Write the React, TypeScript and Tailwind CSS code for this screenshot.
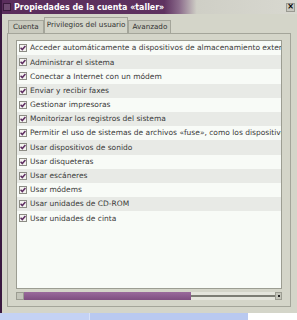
const privileges = [
  'Acceder automáticamente a dispositivos de almacenamiento externo',
  'Administrar el sistema',
  'Conectar a Internet con un módem',
  'Enviar y recibir faxes',
  'Gestionar impresoras',
  'Monitorizar los registros del sistema',
  'Permitir el uso de sistemas de archivos «fuse», como los dispositivos LTSP',
  'Usar dispositivos de sonido',
  'Usar disqueteras',
  'Usar escáneres',
  'Usar módems',
  'Usar unidades de CD-ROM',
  'Usar unidades de cinta',
];

function CheckBox() {
  return (
    <span className="flex h-[8px] w-[8px] shrink-0 items-center justify-center border border-[#8c8c84] bg-[#f4f4f0]">
      <svg width="6" height="6" viewBox="0 0 6 6">
        <path d="M0.6 2.8 L2.3 4.6 L5.4 0.9" fill="none" stroke="#5e2e62" strokeWidth="1.5" />
      </svg>
    </span>
  );
}

export default function App() {
  return (
    <div className="relative h-[320px] w-[297px] overflow-hidden bg-white font-['DejaVu_Sans',sans-serif]">
      {/* window */}
      <div className="flex h-[313px] flex-col border-l-2 border-[#3a1840] bg-[#d4d5c9]">
        {/* title bar */}
        <div className="flex h-[14px] items-center bg-[linear-gradient(90deg,#5a2d5c_0%,#5e3260_55%,#8a6a8a_60%,#cfcfc6_66%,#d8d8d0_100%)] pl-[1px] pr-[2px]">
          <span className="h-[8px] w-[8px] border border-[#3a1a3c] bg-[#6e4a70]" />
          <span className="ml-[3px] font-['DejaVu_Sans_Condensed','DejaVu_Sans',sans-serif] text-[8.8px] font-bold leading-none text-white [font-stretch:condensed]">
            Propiedades de la cuenta «taller»
          </span>
          <span className="ml-auto flex h-[9px] w-[9px] items-center justify-center border border-[#9a9a92] bg-[#c8c8c0] text-[8px] font-bold leading-none text-black">
            ×
          </span>
        </div>

        {/* tabs */}
        <div className="mt-[3px] flex h-[16px] items-end pl-[6px] text-[7.2px] text-[#333]">
          <div className="flex h-[13px] items-center border border-b-0 border-[#a4a59a] bg-[#c9cabe] px-[4px]">Cuenta</div>
          <div className="flex h-[16px] items-center border border-b-0 border-[#a4a59a] bg-[#d4d5c9] px-[2px]">Privilegios del usuario</div>
          <div className="flex h-[13px] items-center border border-b-0 border-[#a4a59a] bg-[#c9cabe] px-[3px]">Avanzado</div>
        </div>

        {/* tab panel */}
        <div className="ml-[5px] mr-[6px] flex h-[274px] flex-col border border-[#a4a59a] px-[8px] pt-[6px]">
          <div className="h-[249px] overflow-hidden border border-[#9c9d92] bg-[#f8fbf7]">
            {privileges.map((p, i) => (
              <div
                key={p}
                className={`flex h-[14.2px] items-center gap-[3px] whitespace-nowrap pl-[2px] text-[7.5px] leading-none text-[#3a3a3a] ${
                  i % 2 === 1 ? 'bg-[#e8eae6]' : 'bg-[#f8fbf7]'
                }`}
              >
                <CheckBox />
                <span>{p}</span>
              </div>
            ))}
          </div>

          {/* horizontal scrollbar */}
          <div className="mt-[3px] flex h-[8px] items-center">
            <span className="h-[8px] w-[8px] border border-[#9c9d92] bg-[#c4c5ba]" />
            <div className="relative h-[8px] flex-1 bg-[#e4e5dc]">
              <div className="absolute left-0 top-0 h-[8px] w-[167px] bg-[linear-gradient(180deg,#9a6a9c,#7e4e80)]" />
              <div className="absolute left-[167px] right-0 top-[3px] h-[2px] bg-[#7c7d74]" />
            </div>
            <span className="flex h-[8px] w-[7px] items-center justify-center border border-[#9c9d92] bg-[#c4c5ba]">
              <span className="h-[2px] w-[2px] bg-[#222]" />
            </span>
          </div>
        </div>
      </div>

      {/* taskbar strip */}
      <div className="flex h-[7px] w-[248px] bg-[#b9c9f0]">
        <div className="w-[90px] border-r border-[#d8e2f8] bg-[#c4d2f4]" />
      </div>
    </div>
  );
}
